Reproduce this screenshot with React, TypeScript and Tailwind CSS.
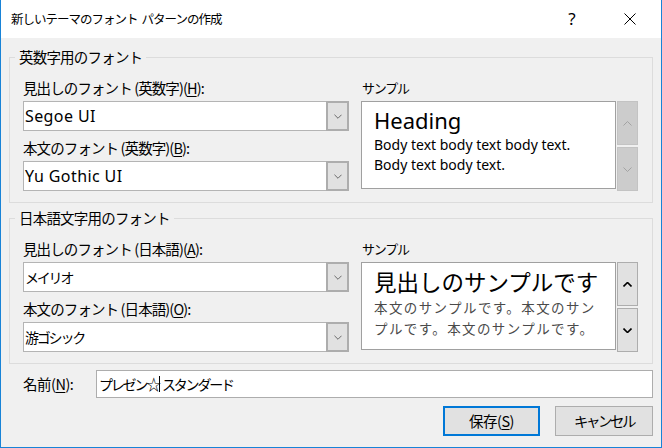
import React from "react"

const jp = "font-['Noto_Sans_CJK_JP',sans-serif]"
const latin = "font-['Noto_Sans','Noto_Sans_CJK_JP',sans-serif]"

function Key({ k }: { k: string }) {
  return <span className="underline decoration-1 underline-offset-2">{k}</span>
}

function Chevron({ up = false, color, size = "w-[9px] h-[5px]", width = 1 }: { up?: boolean; color: string; size?: string; width?: number }) {
  return (
    <svg viewBox="0 0 9 5" className={size} fill="none">
      <path d={up ? "M0.5 4.5 L4.5 0.5 L8.5 4.5" : "M0.5 0.5 L4.5 4.5 L8.5 0.5"} stroke={color} strokeWidth={width} />
    </svg>
  )
}

function ComboBox({ value, latinText = false }: { value: string; latinText?: boolean }) {
  return (
    <div className="flex h-[30px] w-[326px]">
      <div
        className={`flex flex-1 items-center border-y border-l border-[#b4b4b4] bg-white pl-[1px] ${
          latinText ? `${latin} text-[16px] tracking-[0.4px]` : "text-[14px] tracking-[-2.2px]"
        }`}
      >
        {value}
      </div>
      <div className="flex w-[23px] items-center justify-center border-2 border-[#adadad] bg-[#e1e1e1]">
        <Chevron color="#5a5a5a" size="w-[8px] h-[5px]" />
      </div>
    </div>
  )
}

function ScrollButtons({ enabled }: { enabled: boolean }) {
  const box = enabled ? "border-[#adadad] bg-[#e1e1e1]" : "border-[#c3c3c3] bg-[#cccccc]"
  const color = enabled ? "#000000" : "#a3a3a3"
  return (
    <div className="ml-[1px] flex w-[21px] flex-col gap-[2px]">
      <div className={`flex h-[44px] items-center justify-center border ${box}`}>
        <Chevron up color={color} width={enabled ? 1.6 : 1} />
      </div>
      <div className={`flex h-[44px] items-center justify-center border ${box}`}>
        <Chevron color={color} width={enabled ? 1.6 : 1} />
      </div>
    </div>
  )
}

function FontGroup({
  title,
  headLabel,
  headKey,
  headValue,
  bodyLabel,
  bodyKey,
  bodyValue,
  latinValues,
  sample,
  enabled,
  className = "",
}: {
  title: string
  headLabel: string
  headKey: string
  headValue: string
  bodyLabel: string
  bodyKey: string
  bodyValue: string
  latinValues: boolean
  sample: React.ReactNode
  enabled: boolean
  className?: string
}) {
  return (
    <fieldset className={`border border-[#dcdcdc] pb-[11px] pl-[5px] pr-[13px] pt-[11px] ${className}`}>
      <legend className="px-[4px] text-[14.5px] leading-[20px] tracking-[-0.8px]">{title}</legend>
      <div className="ml-[8px] flex">
        <div className="flex w-[326px] flex-col">
          <div className="mb-[3px] h-[20px] text-[14.5px] leading-[20px] tracking-[-0.9px]">
            {headLabel}(<Key k={headKey} />):
          </div>
          <ComboBox value={headValue} latinText={latinValues} />
          <div className="mb-[3px] mt-[7px] h-[20px] text-[14.5px] leading-[20px] tracking-[-0.9px]">
            {bodyLabel}(<Key k={bodyKey} />):
          </div>
          <ComboBox value={bodyValue} latinText={latinValues} />
        </div>
        <div className="ml-[12px] flex flex-col">
          <div className="mb-[3px] h-[20px] pl-[1px] text-[13px] leading-[20px] tracking-[-1.2px]">サンプル</div>
          <div className="flex">
            <div className="h-[88px] w-[255px] border border-[#a0a0a0] bg-white pl-[12px]">{sample}</div>
            <ScrollButtons enabled={enabled} />
          </div>
        </div>
      </div>
    </fieldset>
  )
}

export default function App() {
  return (
    <div className={`flex h-[448px] w-[662px] flex-col border-x border-b border-[#1883d7] bg-[#f0f0f0] text-black ${jp}`}>
      <div className="flex h-[38px] shrink-0 items-center bg-white">
        <div className="flex-1 pl-[10px] text-[12.5px] tracking-[-1px]">
          新しいテーマのフォント<span className="ml-[4px]">パターンの作成</span>
        </div>
        <div className={`flex h-[38px] w-[58px] items-center justify-center text-[17px] ${latin}`}>?</div>
        <div className="mr-[2px] flex h-[38px] w-[58px] items-center justify-center">
          <svg viewBox="0 0 12 12" className="h-[12px] w-[12px]" fill="none">
            <path d="M0.5 0.5 L11.5 11.5 M11.5 0.5 L0.5 11.5" stroke="#000" strokeWidth="1" />
          </svg>
        </div>
      </div>

      <div className="flex flex-1 flex-col px-[8px] pt-[9px]">
        <FontGroup
          title="英数字用のフォント"
          headLabel="見出しのフォント (英数字)"
          headKey="H"
          headValue="Segoe UI"
          bodyLabel="本文のフォント (英数字)"
          bodyKey="B"
          bodyValue="Yu Gothic UI"
          latinValues
          enabled={false}
          sample={
            <div className={`pt-[3px] ${latin}`}>
              <div className="text-[22px] leading-[30px]">Heading</div>
              <div className="text-[14px] leading-[20px]">Body text body text body text.</div>
              <div className="text-[14px] leading-[20px]">Body text body text.</div>
            </div>
          }
        />

        <FontGroup
          className="mt-[5px]"
          title="日本語文字用のフォント"
          headLabel="見出しのフォント (日本語)"
          headKey="A"
          headValue="メイリオ"
          bodyLabel="本文のフォント (日本語)"
          bodyKey="O"
          bodyValue="游ゴシック"
          latinValues={false}
          enabled
          sample={
            <div className="pt-[2px]">
              <div className="text-[22.5px] leading-[32px]">見出しのサンプルです</div>
              <div className="text-[13.5px] leading-[21px] tracking-[1.4px] text-[#4a4a4a]">
                本文のサンプルです。本文のサン
                <br />
                プルです。本文のサンプルです。
              </div>
            </div>
          }
        />

        <div className="mt-[6px] flex items-center">
          <div className="ml-[14px] w-[73px] text-[14.5px] leading-[20px] tracking-[-0.5px]">
            名前(<Key k="N" />):
          </div>
          <div className="flex h-[28px] flex-1 items-center border border-[#adadad] bg-white pl-[2px] text-[14px] tracking-[-2.2px]">
            プレゼン<span className="text-[15px]">☆</span>
            <span className="mr-[2px] inline-block h-[16px] w-px bg-black" />
            スタンダード
          </div>
        </div>

        <div className="mt-[8px] flex justify-end gap-[15px]">
          <button className="flex h-[30px] w-[97px] items-center justify-center border-2 border-[#0078d7] bg-[#e1e1e1] text-[14.5px] tracking-[-0.5px]">
            保存(<Key k="S" />)
          </button>
          <button className="flex h-[30px] w-[98px] items-center justify-center border border-[#adadad] bg-[#e1e1e1] text-[14.5px] tracking-[-2.5px]">
            キャンセル
          </button>
        </div>
      </div>
    </div>
  )
}
